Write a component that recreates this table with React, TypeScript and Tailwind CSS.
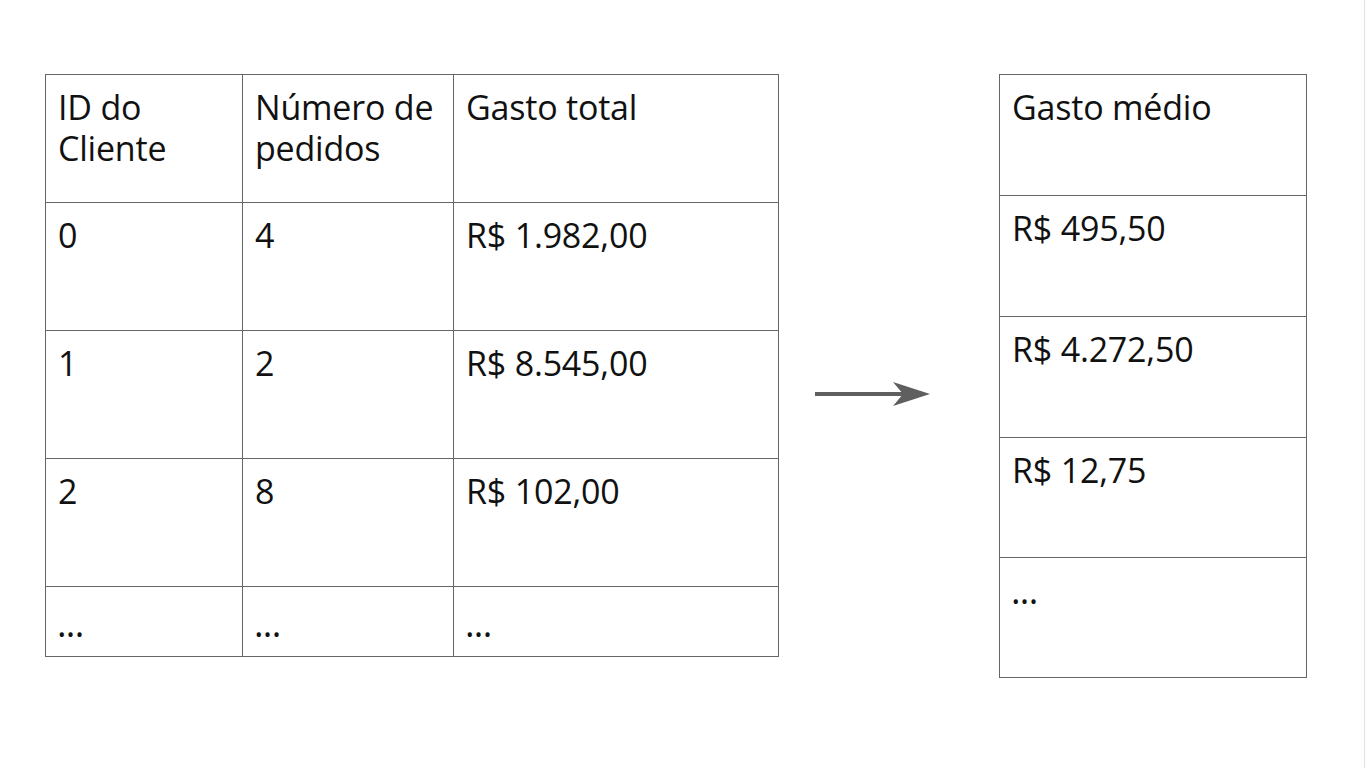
const leftRows = [
  ["ID do Cliente", "Número de pedidos", "Gasto total"],
  ["0", "4", "R$ 1.982,00"],
  ["1", "2", "R$ 8.545,00"],
  ["2", "8", "R$ 102,00"],
  ["...", "...", "..."],
];

const rightRows = ["Gasto médio", "R$ 495,50", "R$ 4.272,50", "R$ 12,75", "..."];

const colW = ["w-[197px]", "w-[211px]", "w-[325px]"];

function Cell({ text, className, dotsPad = "pt-[27px]" }: { text: string; className: string; dotsPad?: string }) {
  const dots = text === "...";
  return (
    <div className={`border-r border-b border-[#666666] pl-[12px] pr-2 ${dots ? dotsPad : "pt-[12px]"} ${className}`}>
      {dots ? (
        <span className="block text-[20px] leading-[41px] tracking-[1.3px]">•••</span>
      ) : (
        text
      )}
    </div>
  );
}

export default function App() {
  return (
    <div className="w-[1365px] h-[768px] bg-white border-r border-[#e2e2e2] flex items-start pt-[74px] pl-[45px] text-[#111111] text-[34px] leading-[41px] tracking-[-0.2px] font-['Open_Sans',sans-serif]">
      <div className="border-t border-l border-[#666666] flex flex-col">
        {leftRows.map((row, i) => (
          <div key={i} className="flex">
            {row.map((c, j) => (
              <Cell key={j} text={c} className={`${colW[j]} ${i === 4 ? "h-[70px]" : "h-[128px]"}`} />
            ))}
          </div>
        ))}
      </div>

      <div className="ml-[36px] mr-[69px] mt-[307px] w-[115px] h-[26px]">
        <svg width="115" height="26" viewBox="0 0 115 26">
          <rect x="0" y="11" width="100" height="4" fill="#5f5f5f" />
          <path d="M78 1 L115 13 L78 25 L88 13 Z" fill="#5f5f5f" />
        </svg>
      </div>

      <div className="border-t border-l border-[#666666] flex flex-col">
        {rightRows.map((c, i) => (
          <Cell
            key={i}
            text={c}
            dotsPad="pt-[23px]"
            className={`w-[307px] ${i < 3 ? "h-[121px]" : "h-[120px]"}`}
          />
        ))}
      </div>
    </div>
  );
}
